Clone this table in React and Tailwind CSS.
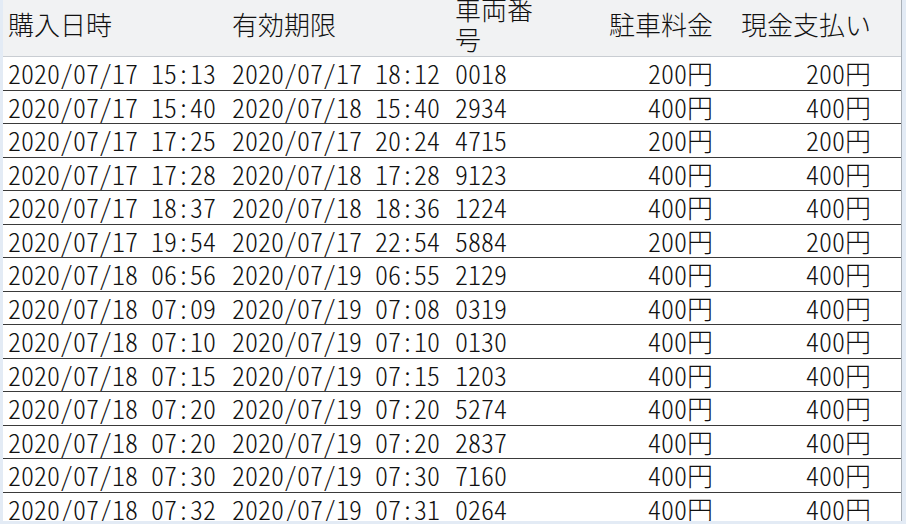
const rows = [
  ['2020/07/17 15:13', '2020/07/17 18:12', '0018', '200円', '200円'],
  ['2020/07/17 15:40', '2020/07/18 15:40', '2934', '400円', '400円'],
  ['2020/07/17 17:25', '2020/07/17 20:24', '4715', '200円', '200円'],
  ['2020/07/17 17:28', '2020/07/18 17:28', '9123', '400円', '400円'],
  ['2020/07/17 18:37', '2020/07/18 18:36', '1224', '400円', '400円'],
  ['2020/07/17 19:54', '2020/07/17 22:54', '5884', '200円', '200円'],
  ['2020/07/18 06:56', '2020/07/19 06:55', '2129', '400円', '400円'],
  ['2020/07/18 07:09', '2020/07/19 07:08', '0319', '400円', '400円'],
  ['2020/07/18 07:10', '2020/07/19 07:10', '0130', '400円', '400円'],
  ['2020/07/18 07:15', '2020/07/19 07:15', '1203', '400円', '400円'],
  ['2020/07/18 07:20', '2020/07/19 07:20', '5274', '400円', '400円'],
  ['2020/07/18 07:20', '2020/07/19 07:20', '2837', '400円', '400円'],
  ['2020/07/18 07:30', '2020/07/19 07:30', '7160', '400円', '400円'],
  ['2020/07/18 07:32', '2020/07/19 07:31', '0264', '400円', '400円'],
]

const cols = 'grid grid-cols-[224px_223px_110px_158px_158px_1fr]'

export default function App() {
  return (
    <div className="w-[906px] h-[524px] bg-[#e3ebf5] pl-[3px] pr-[4px] pb-[3px] overflow-hidden">
      <div
        className="h-full bg-white border-r border-[#a9b0b8] overflow-hidden text-[#111] text-[26px] font-light [font-feature-settings:'hwid'] leading-none"
        style={{ fontFamily: '"Noto Sans CJK JP", "Noto Sans", sans-serif' }}
      >
        {/* header */}
        <div className={`${cols} grid-rows-[57px] h-[57px] bg-[#f1f2f3] border-b border-[#c9cdd2] overflow-hidden`}>
          <div className="px-[5px] pb-[9px] flex items-center">購入日時</div>
          <div className="px-[5px] pb-[9px] flex items-center">有効期限</div>
          <div className="px-[5px] pb-[9px] min-h-0 h-[57px] flex items-center overflow-hidden">
            <div className="leading-[30px] shrink-0">車両番<br />号</div>
          </div>
          <div className="px-[5px] pb-[9px] flex items-center justify-end">駐車料金</div>
          <div className="px-[5px] pb-[9px] flex items-center justify-end">現金支払い</div>
          <div />
        </div>

        {/* rows */}
        {rows.map((r, i) => (
          <div key={i} className={`${cols} h-[33.5px] border-b border-[#3a3a3a] items-center`}>
            <div className="px-[5px]">{r[0]}</div>
            <div className="px-[5px]">{r[1]}</div>
            <div className="px-[5px]">{r[2]}</div>
            <div className="px-[5px] text-right">{r[3]}</div>
            <div className="px-[5px] text-right">{r[4]}</div>
            <div />
          </div>
        ))}
      </div>
    </div>
  )
}
